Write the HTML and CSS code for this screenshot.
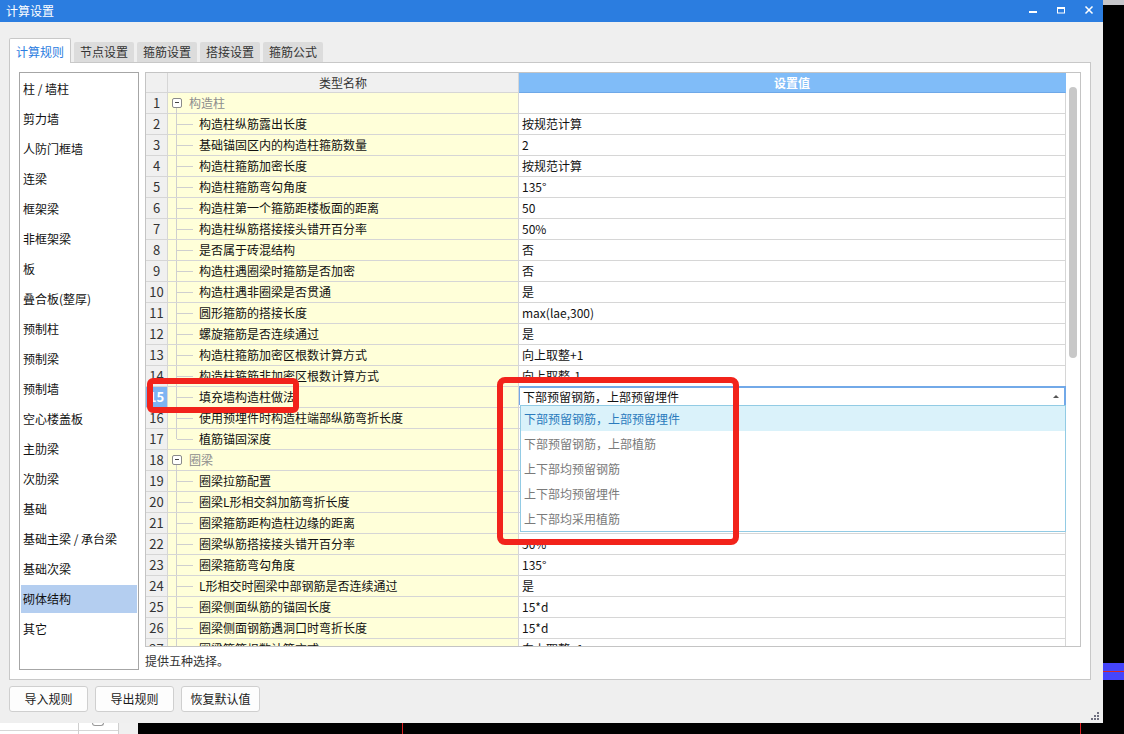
FILE: index.html
```html
<!DOCTYPE html>
<html lang="zh-CN">
<head>
<meta charset="utf-8">
<title>计算设置</title>
<link rel="stylesheet" href="styles.css">
</head>
<body>
<div class="screen">
  <div class="dialog">
    <div class="titlebar">
      <span class="title">计算设置</span>
      <div class="win-ctrls">
        <div class="wbtn"><svg width="10" height="10" viewBox="0 0 10 10"><rect x="1" y="5" width="8" height="2" fill="#fff"/></svg></div>
        <div class="wbtn"><svg width="10" height="10" viewBox="0 0 10 10"><rect x="1.5" y="1.5" width="7" height="5.5" fill="none" stroke="#fff" stroke-width="1"/><rect x="1" y="1" width="8" height="2" fill="#fff"/></svg></div>
        <div class="wbtn"><svg width="10" height="10" viewBox="0 0 10 10"><path d="M1.5 0.5 L8.5 7.5 M8.5 0.5 L1.5 7.5" stroke="#fff" stroke-width="1.5" fill="none"/></svg></div>
      </div>
    </div>
    <div class="body">
      <div class="tabs">
        <div class="tab active">计算规则</div>
        <div class="tab">节点设置</div>
        <div class="tab">箍筋设置</div>
        <div class="tab">搭接设置</div>
        <div class="tab">箍筋公式</div>
      </div>
      <div class="panel">
        <ul class="cat-list">
          <li>柱 / 墙柱</li>
          <li>剪力墙</li>
          <li>人防门框墙</li>
          <li>连梁</li>
          <li>框架梁</li>
          <li>非框架梁</li>
          <li>板</li>
          <li>叠合板(整厚)</li>
          <li>预制柱</li>
          <li>预制梁</li>
          <li>预制墙</li>
          <li>空心楼盖板</li>
          <li>主肋梁</li>
          <li>次肋梁</li>
          <li>基础</li>
          <li>基础主梁 / 承台梁</li>
          <li>基础次梁</li>
          <li class="sel">砌体结构</li>
          <li>其它</li>
        </ul>
        <div class="right">
          <div class="grid">
            <div class="grid-main">
              <div class="row head">
                <div class="num"></div>
                <div class="name">类型名称</div>
                <div class="val">设置值</div>
              </div>
              <div class="row group"><div class="num">1</div><div class="name"><span class="tog"></span>构造柱</div><div class="val"></div></div>
              <div class="row child"><div class="num">2</div><div class="name">构造柱纵筋露出长度</div><div class="val">按规范计算</div></div>
              <div class="row child"><div class="num">3</div><div class="name">基础锚固区内的构造柱箍筋数量</div><div class="val">2</div></div>
              <div class="row child"><div class="num">4</div><div class="name">构造柱箍筋加密长度</div><div class="val">按规范计算</div></div>
              <div class="row child"><div class="num">5</div><div class="name">构造柱箍筋弯勾角度</div><div class="val">135°</div></div>
              <div class="row child"><div class="num">6</div><div class="name">构造柱第一个箍筋距楼板面的距离</div><div class="val">50</div></div>
              <div class="row child"><div class="num">7</div><div class="name">构造柱纵筋搭接接头错开百分率</div><div class="val">50%</div></div>
              <div class="row child"><div class="num">8</div><div class="name">是否属于砖混结构</div><div class="val">否</div></div>
              <div class="row child"><div class="num">9</div><div class="name">构造柱遇圈梁时箍筋是否加密</div><div class="val">否</div></div>
              <div class="row child"><div class="num">10</div><div class="name">构造柱遇非圈梁是否贯通</div><div class="val">是</div></div>
              <div class="row child"><div class="num">11</div><div class="name">圆形箍筋的搭接长度</div><div class="val">max(lae,300)</div></div>
              <div class="row child"><div class="num">12</div><div class="name">螺旋箍筋是否连续通过</div><div class="val">是</div></div>
              <div class="row child"><div class="num">13</div><div class="name">构造柱箍筋加密区根数计算方式</div><div class="val">向上取整+1</div></div>
              <div class="row child"><div class="num">14</div><div class="name">构造柱箍筋非加密区根数计算方式</div><div class="val">向上取整-1</div></div>
              <div class="row child current"><div class="num">15</div><div class="name">填充墙构造柱做法</div>
                <div class="val editing">
                  <div class="combo">下部预留钢筋，上部预留埋件<span class="caret"></span></div>
                  <ul class="dropdown">
                    <li class="hl">下部预留钢筋，上部预留埋件</li>
                    <li>下部预留钢筋，上部植筋</li>
                    <li>上下部均预留钢筋</li>
                    <li>上下部均预留埋件</li>
                    <li>上下部均采用植筋</li>
                  </ul>
                </div>
              </div>
              <div class="row child"><div class="num">16</div><div class="name">使用预埋件时构造柱端部纵筋弯折长度</div><div class="val"></div></div>
              <div class="row child last"><div class="num">17</div><div class="name">植筋锚固深度</div><div class="val"></div></div>
              <div class="row group"><div class="num">18</div><div class="name"><span class="tog"></span>圈梁</div><div class="val"></div></div>
              <div class="row child"><div class="num">19</div><div class="name">圈梁拉筋配置</div><div class="val"></div></div>
              <div class="row child"><div class="num">20</div><div class="name">圈梁L形相交斜加筋弯折长度</div><div class="val"></div></div>
              <div class="row child"><div class="num">21</div><div class="name">圈梁箍筋距构造柱边缘的距离</div><div class="val"></div></div>
              <div class="row child"><div class="num">22</div><div class="name">圈梁纵筋搭接接头错开百分率</div><div class="val">50%</div></div>
              <div class="row child"><div class="num">23</div><div class="name">圈梁箍筋弯勾角度</div><div class="val">135°</div></div>
              <div class="row child"><div class="num">24</div><div class="name">L形相交时圈梁中部钢筋是否连续通过</div><div class="val">是</div></div>
              <div class="row child"><div class="num">25</div><div class="name">圈梁侧面纵筋的锚固长度</div><div class="val">15*d</div></div>
              <div class="row child"><div class="num">26</div><div class="name">圈梁侧面钢筋遇洞口时弯折长度</div><div class="val">15*d</div></div>
              <div class="row child"><div class="num">27</div><div class="name">圈梁箍筋根数计算方式</div><div class="val">向上取整+1</div></div>
            </div>
            <div class="vscroll"><div class="thumb"></div></div>
          </div>
          <div class="desc">提供五种选择。</div>
        </div>
      </div>
      <div class="buttons">
        <button class="btn">导入规则</button>
        <button class="btn">导出规则</button>
        <button class="btn">恢复默认值</button>
      </div>
    </div>
    <svg class="grip" width="8" height="8" viewBox="0 0 8 8"><rect x="6" y="0" width="2" height="2"/><rect x="3" y="3" width="2" height="2"/><rect x="6" y="3" width="2" height="2"/><rect x="0" y="6" width="2" height="2"/><rect x="3" y="6" width="2" height="2"/><rect x="6" y="6" width="2" height="2"/></svg>
  </div>
  <div class="side-strip">
    <div class="side-top"></div>
    <div class="side-blue"></div>
  </div>
  <div class="bottom-strip">
    <div class="bs-cells">
      <div class="bs-c1"></div>
      <div class="bs-c2"><span class="knob"></span></div>
    </div>
    <div class="bs-gray"></div>
    <div class="bs-dark"></div>
  </div>
  <div class="corner"></div>
  <div class="mark mark-a"></div>
  <div class="mark mark-b"></div>
</div>
</body>
</html>
```

FILE: styles.css
```css
* { box-sizing: border-box; margin: 0; padding: 0; }
html, body { width: 1124px; height: 734px; overflow: hidden; }
body {
  background: #000;
  font-family: "Noto Sans CJK SC", "Microsoft YaHei", "Liberation Sans", sans-serif;
  font-size: 12px;
  color: #111;
}
.screen {
  position: relative;
  width: 1124px;
  height: 734px;
  display: grid;
  grid-template-columns: 1103px 21px;
  grid-template-rows: 723px 11px;
}

/* dialog */
.dialog { position: relative; display: flex; flex-direction: column; background: #efefef; }
.titlebar {
  height: 22px; flex: none;
  background: #2b7de0;
  display: flex; align-items: center; justify-content: space-between;
  color: #fff;
}
.title { padding-left: 6px; line-height: 22px; }
.win-ctrls { display: flex; height: 22px; }
.wbtn { width: 28px; height: 22px; display: flex; align-items: center; justify-content: center; }
.wbtn svg { display: block; }

.body { flex: 1; display: flex; flex-direction: column; padding: 16px 12px 11px 9px; }

/* tabs */
.tabs { display: flex; align-items: flex-end; gap: 3px; height: 24px; position: relative; z-index: 1; flex: none; }
.tab {
  width: 60px; height: 20px; line-height: 20px; text-align: center;
  background: #dcdcdc; color: #333; border-radius: 2px 2px 0 0;
}
.tab.active {
  width: 62px; height: 25px; margin-bottom: -1px;
  background: #fff; border: 1px solid #c8c8c8; border-bottom: none;
  color: #2b7de0; line-height: 22px; padding-top: 2px;
}

/* panel */
.panel {
  height: 618px; flex: none;
  background: #fff; border: 1px solid #c8c8c8;
  padding: 9px; display: flex; gap: 6px;
}
.cat-list { width: 120px; flex: none; list-style: none; border: 1px solid #a6a6a6; padding: 2px 1px; }
.cat-list li { height: 28px; line-height: 28px; margin-bottom: 2px; padding-left: 2px; color: #111; white-space: nowrap; }
.cat-list li.sel { background: #b4cef0; }

.right { flex: 1; display: flex; flex-direction: column; min-width: 0; }
.grid { height: 575px; flex: none; border: 1px solid #c4c4c4; display: flex; overflow: hidden; }
.grid-main { flex: 1; display: flex; flex-direction: column; min-width: 0; overflow: hidden; }

.row { display: flex; height: 21px; flex: none; border-bottom: 1px solid #d6d6d6; }
.num {
  width: 22px; flex: none; border-right: 1px solid #d6d6d6;
  background: #f0f0f0; text-align: center; font-size: 13px; line-height: 20px; color: #333;
}
.name {
  width: 351px; flex: none; position: relative;
  background: #ffffd9; border-right: 1px solid #d6d6d6;
  line-height: 20px; padding-left: 31px; white-space: nowrap; overflow: hidden;
}
.val { width: 547px; flex: none; border-right: 1px solid #d6d6d6; line-height: 20px; padding-left: 3px; white-space: nowrap; color: #111; }

.row.head { height: 20px; border-bottom: none; }
.head .num { background: #f0f0f0; border-bottom: 1px solid #d6d6d6; line-height: 19px; }
.head .name { background: #f0f0f0; text-align: center; padding-left: 0; color: #333; border-bottom: 1px solid #d6d6d6; line-height: 19px; }
.head .val { background: #80bcf8; color: #fff; font-weight: bold; text-align: center; padding-left: 0; border-bottom: 1px solid #6ea8e8; border-right-color: #80bcf8; line-height: 19px; }

.group .name { padding-left: 21px; color: #8d8d8d; overflow: visible; }
.tog {
  position: absolute; left: 4px; top: 5px; width: 10px; height: 10px;
  border: 1px solid #8a8a8a; border-radius: 2px; background: #fff;
}
.tog::before { content: ""; position: absolute; left: 2px; top: 3px; width: 4px; height: 1px; background: #444; }
.group .name::after { content: ""; position: absolute; left: 8px; top: 15px; bottom: -1px; width: 1px; background: #cfcfcf; }
.child .name::before { content: ""; position: absolute; left: 8px; top: -1px; bottom: -1px; width: 1px; background: #cfcfcf; }
.child .name::after { content: ""; position: absolute; left: 9px; top: 10px; width: 16px; height: 1px; background: #cfcfcf; }
.child.last .name::before { bottom: 10px; }

.current .num { background: #7db4f2; color: #fff; font-weight: bold; }

.val.editing { position: relative; }
.combo {
  position: absolute; top: -1px; left: 0; right: -1px; height: 19px;
  background: #fff; border: solid #72a9e8; border-width: 2px 2px 0 1px;
  padding-left: 3px; line-height: 17px; color: #111; z-index: 9;
}
.caret {
  position: absolute; right: 5px; top: 7px; width: 0; height: 0;
  border-left: 3px solid transparent; border-right: 3px solid transparent; border-bottom: 3px solid #555;
}
.dropdown {
  position: absolute; top: 18px; left: 1px; right: -1px; z-index: 10;
  list-style: none; background: #fff; border: 1px solid #92cbe4;
}
.dropdown li { height: 25px; line-height: 25px; padding-left: 3px; color: #7a7a7a; }
.dropdown li.hl { background: #daf2fa; color: #2a7bbd; }

.vscroll { width: 14px; flex: none; background: #fff; padding: 14px 0 0 3px; }
.thumb { width: 8px; height: 271px; border-radius: 4px; background: #c8c8c8; }

.desc { padding-top: 6px; line-height: 16px; color: #333; }

.buttons { display: flex; gap: 7px; margin-top: 6px; flex: none; }
.btn {
  width: 79px; height: 26px; border: 1px solid #cfcfcf; border-radius: 3px;
  background: #fdfdfd; font: inherit; color: #1a1a1a; text-align: center; line-height: 24px;
}

.grip { position: absolute; right: 4px; bottom: 3px; fill: #6f7080; }

/* surroundings */
.side-strip { background: #000; display: flex; flex-direction: column; }
.side-top { height: 5px; background: #c6c6ca; }
.side-blue { margin-top: 658px; height: 17px; background: linear-gradient(#4545fb 0 8px, #d42a2a 8px 9px, #4545fb 9px); }

.bottom-strip { display: flex; background: #000; }
.bs-cells {
  width: 119px; display: flex; background: #fff;
  background-image: linear-gradient(to bottom, transparent 7px, #d6d6d6 7px 8px, transparent 8px);
}
.bs-c1 { width: 79px; border-right: 1px solid #cfcfcf; }
.bs-c2 { width: 40px; border-right: 1px solid #cfcfcf; }
.knob { display: block; margin-left: 13px; width: 12px; height: 3px; border: 1px solid #999; border-top: none; border-radius: 0 0 3px 3px; background: #fff; }
.bs-gray { width: 19px; background: #f0f0f0; }
.bs-dark {
  flex: 1;
  background: linear-gradient(to right, transparent 264px, #e02020 264px 265px, transparent 265px 942px, #e02020 942px 943px, transparent 943px);
}
.corner { background: #000; }

.mark { position: absolute; border: 6px solid #f2231b; border-radius: 6px; pointer-events: none; z-index: 20; }
.mark-a { left: 147px; top: 378px; width: 152px; height: 35px; }
.mark-b { left: 497px; top: 377px; width: 242px; height: 168px; border-radius: 8px; }
```
